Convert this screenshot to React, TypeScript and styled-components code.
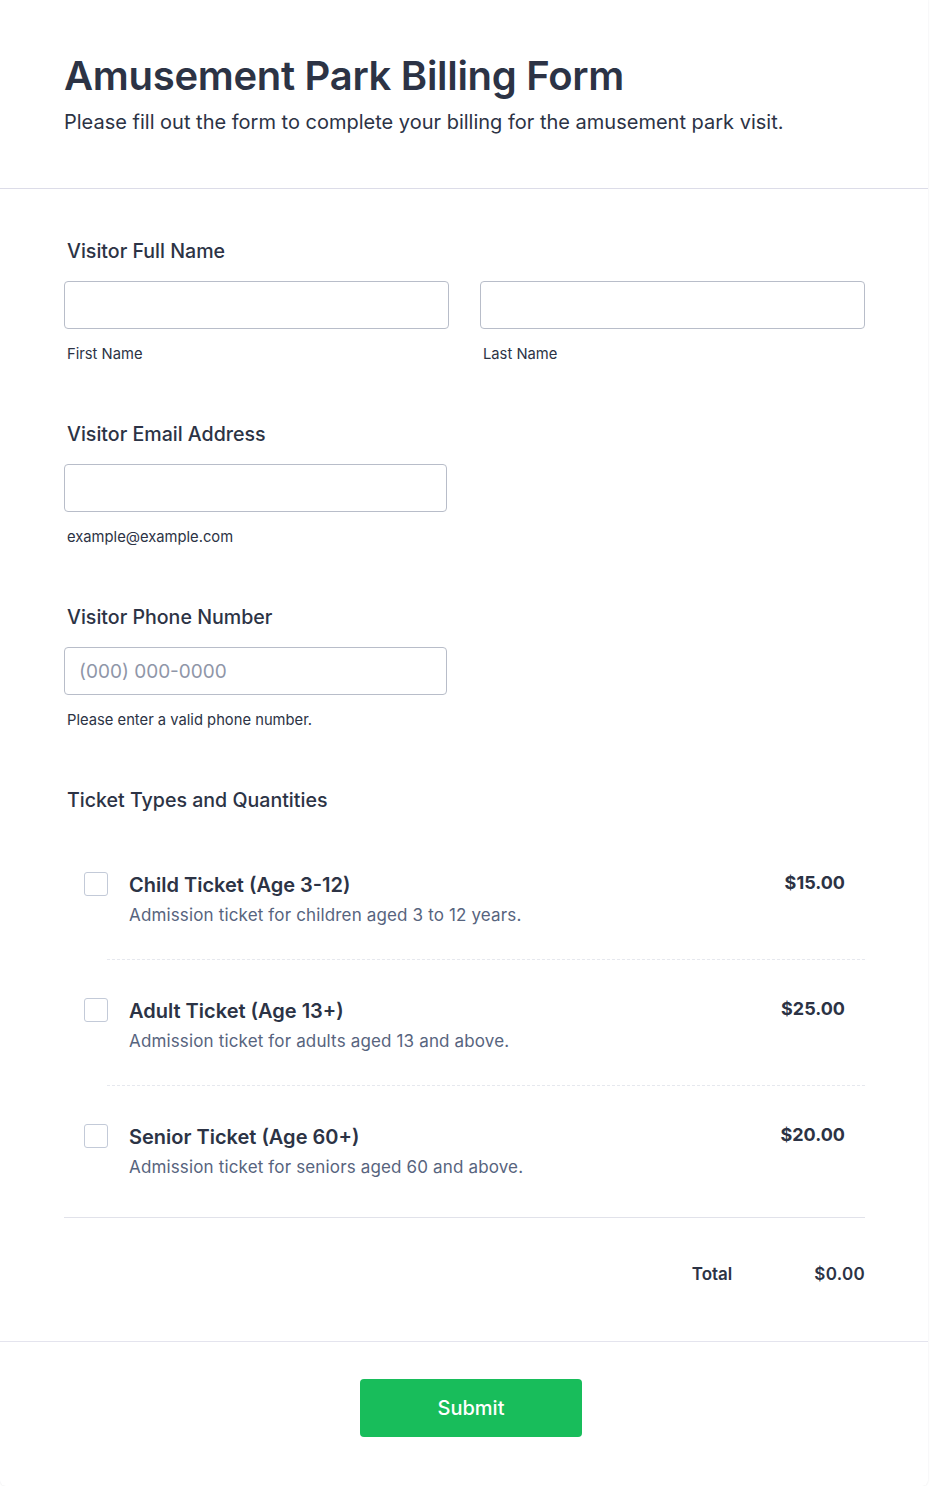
import styled, { createGlobalStyle } from 'styled-components';

const GlobalStyle = createGlobalStyle`
  * { box-sizing: border-box; }
  body {
    margin: 0;
    background: #ffffff;
    font-family: Inter, "Noto Sans", sans-serif;
    color: #2c3345;
  }
`;

export const Card = styled.div`
  width: 928px;
  min-height: 1486px;
  background: #ffffff;
  border-radius: 0 0 6px 6px;
  box-shadow: 0 0 2px rgba(42, 47, 69, 0.12);
`;

export const Header = styled.header`
  padding: 52px 64px 53px;
  border-bottom: 1px solid #dcdce8;
`;

export const Title = styled.h1`
  margin: 0;
  font-size: 40px;
  line-height: 48px;
  font-weight: 600;
  letter-spacing: -0.3px;
`;

export const Subtitle = styled.p`
  margin: 9px 0 0;
  font-size: 20px;
  line-height: 26px;
  font-weight: 400;
`;

export const FormBody = styled.div`
  padding: 50px 63px 0 64px;
`;

export const Field = styled.div`
  margin-bottom: 58px;
`;

export const Label = styled.div`
  padding-left: 3px;
  font-size: 19.6px;
  line-height: 24px;
  font-weight: 500;
`;

export const InputRow = styled.div`
  display: grid;
  grid-template-columns: 385px 385px;
  column-gap: 31px;
  margin-top: 18px;
`;

export const InputCol = styled.div`
  display: flex;
  flex-direction: column;
`;

export const Input = styled.input<{ $width?: number }>`
  width: ${(p) => (p.$width ? `${p.$width}px` : '100%')};
  height: 48px;
  border: 1px solid #b8bdc9;
  border-radius: 4px;
  padding: 0 14px;
  font-family: inherit;
  font-size: 19px;
  color: #2c3345;
  background: #fff;
  outline: none;

  &::placeholder {
    color: #8f96a8;
  }
`;

export const SingleInput = styled.div`
  margin-top: 18px;
`;

export const Sublabel = styled.div`
  margin-top: 15px;
  padding-left: 3px;
  font-size: 14.75px;
  line-height: 20px;
  color: #2c3345;
`;

export const TicketLabel = styled(Label)`
  margin-bottom: 22px;
`;

export const ProductList = styled.div`
  border-bottom: 1px solid #e1e2ea;
`;

export const Product = styled.div<{ $last?: boolean }>`
  display: grid;
  grid-template-columns: 24px 1fr auto;
  column-gap: 21px;
  padding: 38px 20px ${(p) => (p.$last ? '38px' : '32px')};
`;

export const Checkbox = styled.span`
  width: 24px;
  height: 24px;
  border: 1px solid #c3cad8;
  border-radius: 3px;
  background: #fff;
`;

export const ProductInfo = styled.div`
  display: flex;
  flex-direction: column;
  gap: 4px;
  margin-top: -1px;
`;

export const ProductName = styled.div`
  font-size: 20px;
  line-height: 28px;
  font-weight: 600;
`;

export const ProductDesc = styled.div`
  font-size: 17px;
  line-height: 24px;
  letter-spacing: 0.15px;
  color: #57647e;
`;

export const Price = styled.div`
  font-size: 18px;
  line-height: 26px;
  font-weight: 700;
  margin-top: -2px;
`;

export const DashedDivider = styled.div`
  margin-left: 43px;
  border-top: 1px dashed #e6e8ee;
`;

export const TotalRow = styled.div`
  display: flex;
  justify-content: flex-end;
  align-items: center;
  gap: 82px;
  padding: 43px 0 54px;
  font-size: 17px;
  line-height: 26px;
  font-weight: 600;
`;

export const TotalPrice = styled.span`
  font-size: 17px;
  font-weight: 600;
  letter-spacing: 0.3px;
`;

export const Footer = styled.div`
  display: flex;
  justify-content: center;
  padding: 37px 0 46px 14px;
  border-top: 1px solid #e4e4ee;
`;

export const SubmitButton = styled.button`
  width: 222px;
  height: 58px;
  border: none;
  border-radius: 4px;
  background: #18bd5b;
  color: #ffffff;
  font-family: inherit;
  font-size: 20px;
  font-weight: 500;
  cursor: pointer;
`;

const products = [
  {
    name: 'Child Ticket (Age 3-12)',
    desc: 'Admission ticket for children aged 3 to 12 years.',
    price: '$15.00',
  },
  {
    name: 'Adult Ticket (Age 13+)',
    desc: 'Admission ticket for adults aged 13 and above.',
    price: '$25.00',
  },
  {
    name: 'Senior Ticket (Age 60+)',
    desc: 'Admission ticket for seniors aged 60 and above.',
    price: '$20.00',
  },
];

export default function App() {
  return (
    <>
      <GlobalStyle />
      <Card>
        <Header>
          <Title>Amusement Park Billing Form</Title>
          <Subtitle>
            Please fill out the form to complete your billing for the amusement park visit.
          </Subtitle>
        </Header>

        <FormBody>
          <Field>
            <Label>Visitor Full Name</Label>
            <InputRow>
              <InputCol>
                <Input type="text" />
                <Sublabel>First Name</Sublabel>
              </InputCol>
              <InputCol>
                <Input type="text" />
                <Sublabel>Last Name</Sublabel>
              </InputCol>
            </InputRow>
          </Field>

          <Field>
            <Label>Visitor Email Address</Label>
            <SingleInput>
              <Input type="email" $width={383} />
              <Sublabel>example@example.com</Sublabel>
            </SingleInput>
          </Field>

          <Field>
            <Label>Visitor Phone Number</Label>
            <SingleInput>
              <Input type="tel" $width={383} placeholder="(000) 000-0000" />
              <Sublabel>Please enter a valid phone number.</Sublabel>
            </SingleInput>
          </Field>

          <TicketLabel>Ticket Types and Quantities</TicketLabel>
          <ProductList>
            {products.map((p, i) => (
              <div key={p.name}>
                {i > 0 && <DashedDivider />}
                <Product $last={i === products.length - 1}>
                  <Checkbox />
                  <ProductInfo>
                    <ProductName>{p.name}</ProductName>
                    <ProductDesc>{p.desc}</ProductDesc>
                  </ProductInfo>
                  <Price>{p.price}</Price>
                </Product>
              </div>
            ))}
          </ProductList>

          <TotalRow>
            <span>Total</span>
            <TotalPrice>$0.00</TotalPrice>
          </TotalRow>
        </FormBody>

        <Footer>
          <SubmitButton type="button">Submit</SubmitButton>
        </Footer>
      </Card>
    </>
  );
}
